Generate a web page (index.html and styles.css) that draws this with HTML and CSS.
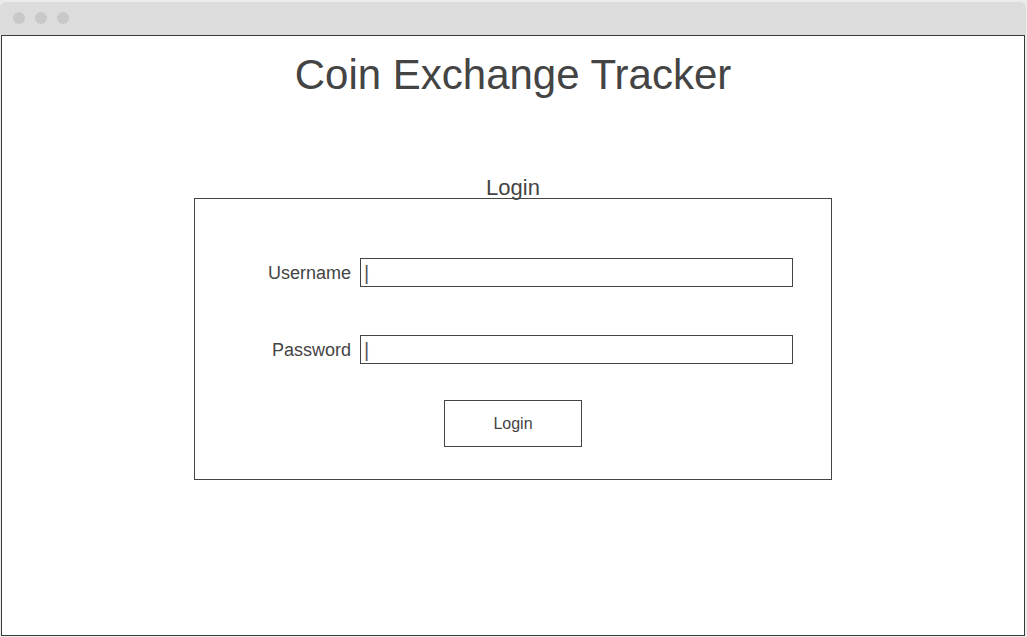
FILE: index.html
```html
<!DOCTYPE html>
<html lang="en">
<head>
<meta charset="utf-8">
<title>Coin Exchange Tracker</title>
<link rel="stylesheet" href="styles.css">
</head>
<body>
<div class="browser">
  <div class="titlebar">
    <span class="dot"></span>
    <span class="dot"></span>
    <span class="dot"></span>
  </div>
  <div class="window">
    <h1 class="title">Coin Exchange Tracker</h1>
    <h2 class="login-heading">Login</h2>
    <div class="login-box">
      <div class="field">
        <label class="field-label">Username</label>
        <div class="field-input"><span class="caret">|</span></div>
      </div>
      <div class="field field-second">
        <label class="field-label">Password</label>
        <div class="field-input"><span class="caret">|</span></div>
      </div>
      <div class="actions">
        <div class="login-button">Login</div>
      </div>
    </div>
  </div>
</div>
</body>
</html>
```

FILE: styles.css
```css
* {
  box-sizing: border-box;
}

html, body {
  margin: 0;
  padding: 0;
  background: #ebebeb;
  font-family: "Liberation Sans", Arial, sans-serif;
  color: #444444;
}

.browser {
  width: 1026px;
  padding-top: 2px;
}

.titlebar {
  height: 33px;
  background: #dcdcdc;
  border-radius: 6px 6px 0 0;
  display: flex;
  align-items: center;
  gap: 10px;
  padding-left: 13px;
  padding-bottom: 1px;
}

.dot {
  width: 12px;
  height: 12px;
  border-radius: 50%;
  background: #c8c8c8;
}

.window {
  margin-left: 1px;
  width: 1024px;
  height: 601px;
  background: #ffffff;
  border: 1px solid #3a3a3a;
  display: flex;
  flex-direction: column;
  align-items: center;
  padding-top: 15px;
}

.title {
  margin: 0;
  font-size: 42px;
  line-height: 48px;
  font-weight: normal;
  color: #444444;
}

.login-heading {
  margin: 76px 0 0 0;
  font-size: 22px;
  line-height: 26px;
  font-weight: normal;
  color: #444444;
}

.login-box {
  margin-top: -3px;
  width: 638px;
  height: 282px;
  border: 1px solid #444444;
  padding-top: 59px;
  display: flex;
  flex-direction: column;
}

.field {
  display: flex;
  align-items: center;
  height: 29px;
}

.field-second {
  margin-top: 48px;
}

.field-label {
  width: 156px;
  text-align: right;
  font-size: 18px;
  line-height: 22px;
  padding-top: 1px;
  color: #444444;
}

.field-input {
  margin-left: 9px;
  width: 433px;
  height: 29px;
  border: 1px solid #444444;
  display: flex;
  align-items: center;
  padding-left: 3px;
}

.caret {
  font-size: 20px;
  line-height: 20px;
  color: #555555;
}

.actions {
  margin-top: 36px;
  display: flex;
  justify-content: center;
}

.login-button {
  width: 138px;
  height: 47px;
  border: 1px solid #444444;
  display: flex;
  align-items: center;
  justify-content: center;
  font-size: 16px;
  color: #444444;
}
```
